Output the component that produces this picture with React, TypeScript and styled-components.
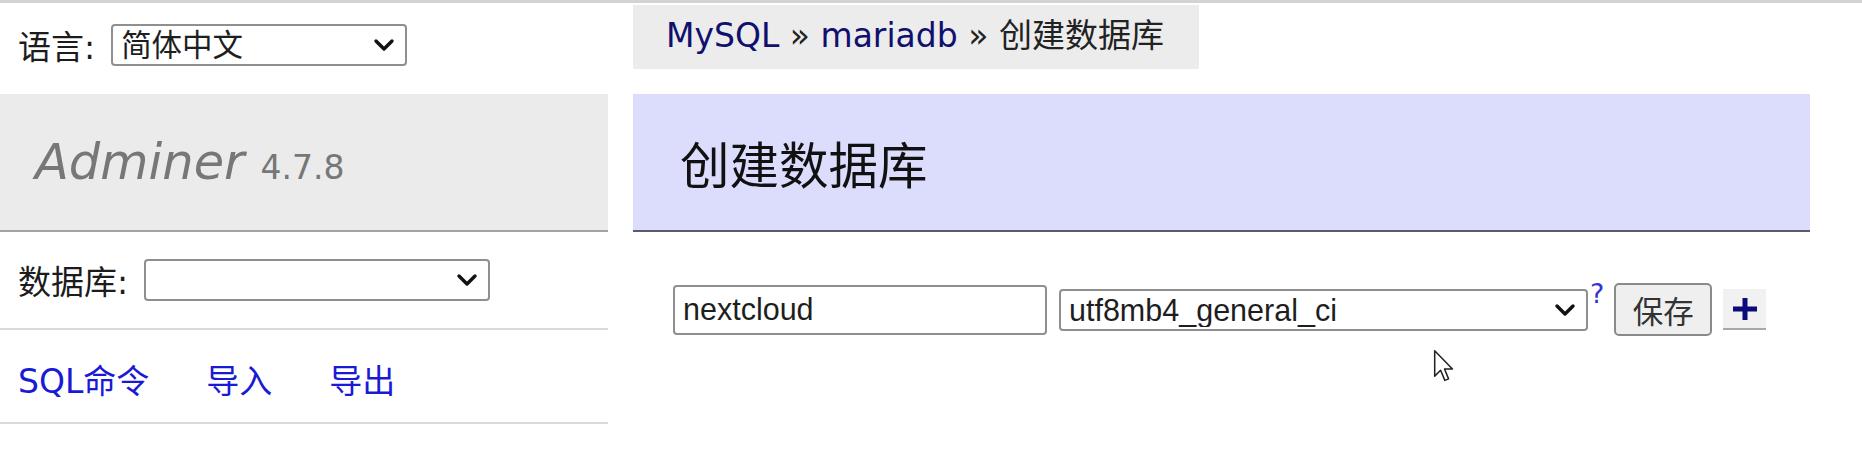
import React from 'react';
import styled, { createGlobalStyle } from 'styled-components';

const GlobalStyle = createGlobalStyle`
  html, body { margin: 0; padding: 0; background: #ffffff; }
  body {
    font-family: "DejaVu Sans", "Noto Sans CJK SC", sans-serif;
    color: #1a1a1a;
  }
`;

const Page = styled.div`
  position: relative;
  width: 1862px;
  height: 471px;
  box-sizing: border-box;
  border-top: 3px solid #d3d3d3;
  display: flex;
  align-items: flex-start;
  overflow: hidden;
`;

const Sidebar = styled.aside`
  flex: 0 0 608px;
  width: 608px;
  display: flex;
  flex-direction: column;
`;

const Row = styled.div<{ $h: number; $pt?: number; $pb?: number; $line?: boolean }>`
  display: flex;
  align-items: center;
  box-sizing: border-box;
  height: ${(p) => p.$h}px;
  padding: ${(p) => p.$pt ?? 0}px 0 ${(p) => p.$pb ?? 0}px 18px;
  border-bottom: ${(p) => (p.$line ? '2px solid #dadada' : 'none')};
  font-size: 33px;
`;

const Label = styled.label`
  font-size: 33px;
  color: #1c1c1c;
  margin-right: 16px;
  white-space: nowrap;
`;

const SelectBox = styled.div<{ $w: number; $h: number }>`
  position: relative;
  width: ${(p) => p.$w}px;
  height: ${(p) => p.$h}px;
  flex: 0 0 auto;
`;

const NativeSelect = styled.select`
  appearance: none;
  -webkit-appearance: none;
  width: 100%;
  height: 100%;
  box-sizing: border-box;
  margin: 0;
  padding: 0 44px 0 8px;
  border: 2px solid #8f8f8f;
  border-radius: 4px;
  background: #ffffff;
  color: #1e1e1e;
  font-family: "Liberation Sans", "Noto Sans CJK SC", sans-serif;
  font-size: 30.5px;
  outline: none;
`;

const Chevron = styled.svg`
  position: absolute;
  right: 11px;
  top: 50%;
  transform: translateY(-50%);
  pointer-events: none;
`;

const Brand = styled.h1`
  margin: 0;
  height: 136px;
  box-sizing: content-box;
  display: flex;
  align-items: center;
  padding-left: 35px;
  background: #ebebeb;
  border-bottom: 2px solid #a3a3a3;
  font-weight: normal;
  white-space: nowrap;
`;

const BrandName = styled.span`
  font-style: italic;
  font-size: 49.5px;
  color: #777777;
`;

const Version = styled.span`
  font-size: 33px;
  color: #777777;
  margin-left: 16px;
`;

const Links = styled.div`
  display: flex;
  gap: 57px;
`;

const MenuLink = styled.a`
  color: #1a1ad6;
  text-decoration: none;
  font-size: 33px;
  white-space: nowrap;
`;

const Main = styled.main`
  flex: 0 0 1177px;
  width: 1177px;
  margin-left: 25px;
  display: flex;
  flex-direction: column;
  align-items: flex-start;
`;

const Breadcrumb = styled.nav`
  margin-top: 2px;
  height: 64px;
  line-height: 62px;
  padding: 0 35px 0 33px;
  background: #ececec;
  font-size: 33px;
  color: #222222;
  white-space: nowrap;
`;

const Crumb = styled.a`
  color: #10106e;
  text-decoration: none;
`;

const Title = styled.h2`
  margin: 25px 0 0;
  width: 100%;
  height: 138px;
  box-sizing: border-box;
  display: flex;
  align-items: center;
  padding-left: 47px;
  background: #dcdcfc;
  border-bottom: 2px solid #5c5c68;
  font-size: 49.5px;
  font-weight: normal;
  color: #111111;
`;

const FormRow = styled.form`
  display: flex;
  align-items: center;
  height: 53px;
  margin-top: 51px;
  padding-left: 40px;
`;

const TextInput = styled.input`
  width: 374px;
  height: 50px;
  box-sizing: border-box;
  margin: 0;
  padding: 0 8px;
  border: 2px solid #8f8f8f;
  border-radius: 4px;
  background: #ffffff;
  color: #1e1e1e;
  font-family: "Liberation Sans", sans-serif;
  font-size: 30.5px;
  outline: none;
`;

const Gap = styled.span<{ $w: number }>`
  display: block;
  width: ${(p) => p.$w}px;
  flex: 0 0 auto;
`;

const Help = styled.sup`
  align-self: flex-start;
  margin: -3px 0 0 2px;
  font-size: 27px;
  line-height: 1;
  color: #3434d0;
  font-family: "DejaVu Sans", sans-serif;
`;

const SaveButton = styled.button`
  width: 98px;
  height: 53px;
  box-sizing: border-box;
  margin: 0 0 0 10px;
  padding: 0;
  border: 2px solid #8a8a8a;
  border-radius: 5px;
  background: #efefef;
  color: #333333;
  font-family: "Noto Sans CJK SC", sans-serif;
  font-size: 30.5px;
`;

const PlusButton = styled.button`
  width: 43px;
  height: 41px;
  box-sizing: border-box;
  margin: 0 0 0 11px;
  padding: 0;
  border: none;
  border-bottom: 2px solid #a8a8a8;
  background: #f1f1f1;
  display: flex;
  align-items: center;
  justify-content: center;
`;

const Cursor = styled.svg`
  position: absolute;
  left: 1433px;
  top: 346px;
  pointer-events: none;
`;

const ChevronIcon = () => (
  <Chevron width="24" height="16" viewBox="0 0 24 16">
    <polyline points="4,4 12,12 20,4" fill="none" stroke="#111" strokeWidth="3.4" strokeLinecap="round" strokeLinejoin="round" />
  </Chevron>
);

const Select = ({ w, h, value }: { w: number; h: number; value: string }) => (
  <SelectBox $w={w} $h={h}>
    <NativeSelect value={value} onChange={() => undefined}>
      <option value={value}>{value}</option>
    </NativeSelect>
    <ChevronIcon />
  </SelectBox>
);

export default function App() {
  return (
    <>
      <GlobalStyle />
      <Page>
        <Sidebar>
          <Row $h={91} $pb={7}>
            <Label>语言:</Label>
            <Select w={296} h={42} value="简体中文" />
          </Row>
          <Brand>
            <span>
              <BrandName>Adminer</BrandName>
              <Version>4.7.8</Version>
            </span>
          </Brand>
          <Row $h={98} $line>
            <Label>数据库:</Label>
            <Select w={346} h={42} value="" />
          </Row>
          <Row $h={94} $pt={6} $line>
            <Links>
              <MenuLink href="#">SQL命令</MenuLink>
              <MenuLink href="#">导入</MenuLink>
              <MenuLink href="#">导出</MenuLink>
            </Links>
          </Row>
        </Sidebar>
        <Main>
          <Breadcrumb>
            <Crumb href="#">MySQL</Crumb> » <Crumb href="#">mariadb</Crumb> » 创建数据库
          </Breadcrumb>
          <Title>创建数据库</Title>
          <FormRow onSubmit={(e) => e.preventDefault()}>
            <TextInput defaultValue="nextcloud" />
            <Gap $w={12} />
            <Select w={529} h={42} value="utf8mb4_general_ci" />
            <Help>?</Help>
            <SaveButton type="button">保存</SaveButton>
            <PlusButton type="button" aria-label="add">
              <svg width="24" height="22" viewBox="0 0 24 22">
                <rect x="0" y="8.5" width="24" height="5" fill="#0a0a7a" />
                <rect x="9.5" y="0" width="5" height="22" fill="#0a0a7a" />
              </svg>
            </PlusButton>
          </FormRow>
        </Main>
        <Cursor width="22" height="34" viewBox="0 0 13 20">
          <path d="M1,1 L1,16 L4.5,12.5 L7,18.5 L9.2,17.6 L6.8,11.8 L11.5,11.8 Z" fill="#ffffff" stroke="#222" strokeWidth="0.9" strokeLinejoin="round" />
        </Cursor>
      </Page>
    </>
  );
}
